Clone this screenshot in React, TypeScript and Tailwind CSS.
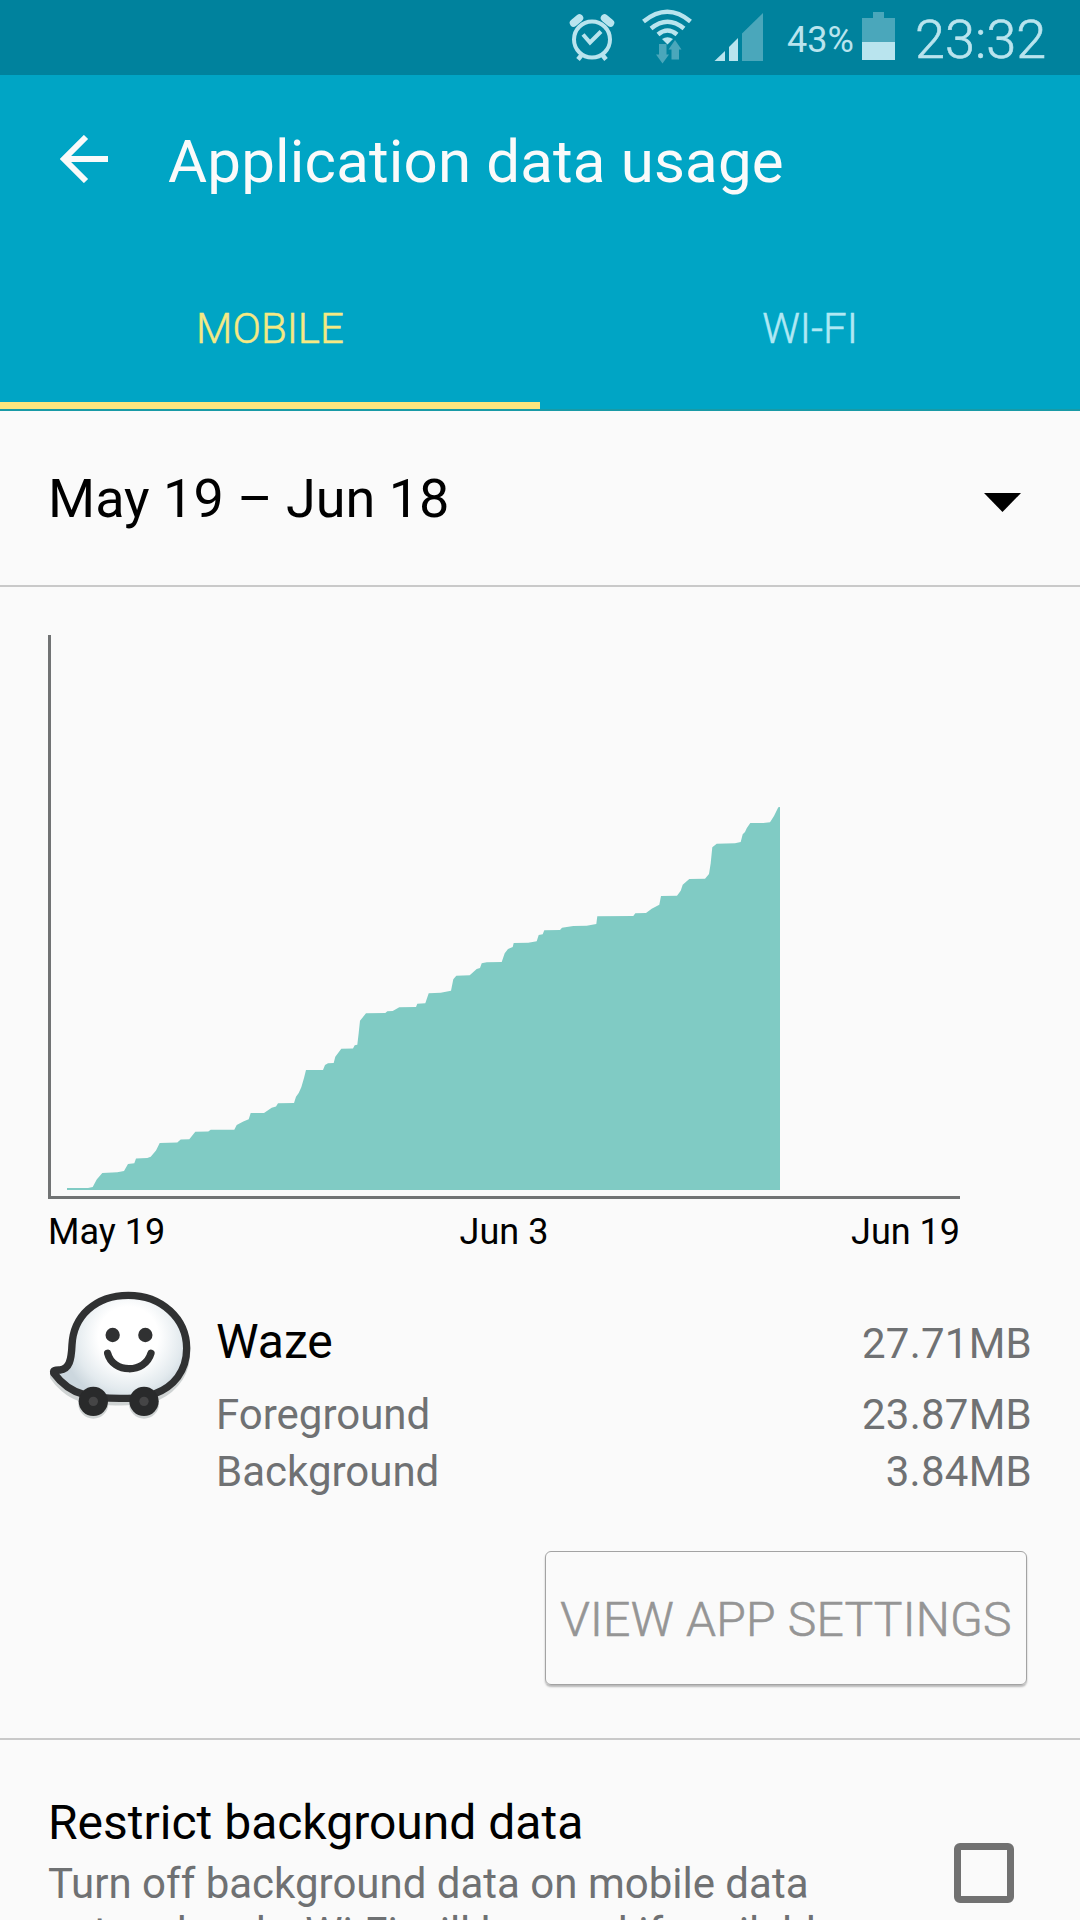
import React, { useState } from 'react'

const usage = [
    [67, 1188], [88, 1188], [92.7, 1187], [96.7, 1179.6], [102.3, 1173], [117.3, 1172.2], [124, 1171], [128, 1164],
    [134.3, 1163.3], [136, 1158.4], [147.3, 1158], [150.7, 1156.7], [156, 1150.6], [159.7, 1143], [177.3, 1142.5],
    [180.7, 1139.6], [189.3, 1139.2], [195.3, 1131.8], [208.3, 1131.4], [210.7, 1129.8], [234.3, 1129.8], [236.7, 1124.9],
    [243.3, 1121.6], [248.7, 1119.2], [250.7, 1113], [264, 1113], [271.7, 1107.8], [276, 1106.5], [278, 1103.3],
    [294, 1102.9], [296, 1096.7], [298.7, 1093], [301.3, 1087.3], [304, 1078], [306, 1070], [323, 1070], [325, 1065],
    [328, 1063.3], [333.7, 1063], [335.3, 1056.7], [341.3, 1048.7], [353, 1048.5], [354.7, 1045.3], [357.3, 1044.7],
    [358.7, 1033], [360, 1020.7], [366, 1013.3], [385.3, 1013], [387.3, 1011.3], [392.7, 1011], [399.3, 1007.3],
    [416, 1007], [417.3, 1003.7], [425.3, 1003.3], [428.7, 993.3], [440.7, 992.7], [451, 990.7], [453.3, 979.3],
    [456.3, 975.7], [469.7, 975.3], [476.7, 969], [480, 968], [481.7, 963.3], [486.7, 962.3], [501.7, 962],
    [504.7, 953.3], [508, 949], [512.7, 947], [513.7, 943], [528.3, 942.7], [536.7, 941.3], [538.7, 935],
    [542.7, 934.3], [544.3, 930.3], [560, 930], [562, 927.7], [573.3, 926], [586.7, 925.7], [596.3, 924],
    [597.3, 916.3], [633.3, 916], [635.3, 913.3], [646, 913], [651.7, 908.7], [659.3, 904.7], [661, 896],
    [677, 895.7], [680.7, 890.7], [682.7, 884.7], [689.3, 879], [705, 878.7], [709, 874], [710.7, 863.3],
    [712.3, 847.3], [716.7, 843.7], [735, 843.3], [740.7, 842], [742.7, 834.3], [745, 832], [746.7, 828.3],
    [750.3, 823], [763.3, 823], [770, 822.3], [774, 816], [778.3, 807.3], [780, 807],
]

function StatusBar() {
    return (
        <div className="flex h-[75px] bg-[#00829d] text-[#b9e4ee]">
            <svg className="ml-[560px] h-[75px] w-[220px] shrink-0" viewBox="560 0 220 75" fill="none">
                {/* alarm */}
                <circle cx="592" cy="39.5" r="18" stroke="#b9e4ee" strokeWidth="4" />
                <path d="M573.500 23l6-5M610.500 23l-6-5" stroke="#b9e4ee" strokeWidth="7.500" strokeLinecap="round" />
                <path d="M583 34.500l7 8 11-11" stroke="#b9e4ee" strokeWidth="4" />
                <path d="M582 54.500l-4 5M602 54.500l4 5" stroke="#b9e4ee" strokeWidth="4.500" />
                {/* wifi */}
                <path d="M643.500 21.500Q667.500 2 690.500 21.500" stroke="#b9e4ee" strokeWidth="4.500" />
                <path d="M651 28.500Q667.500 15 684 28.500" stroke="#b9e4ee" strokeWidth="4.500" />
                <path d="M658 34.500Q667.500 26.500 677 34.500" stroke="#b9e4ee" strokeWidth="4.500" />
                <path d="M662 39Q667.500 35.500 673 39L667.500 44.500z" fill="#b9e4ee" />
                <path d="M659 44h7.500v10.500h2.500l-6.500 9-6.500-9h3zM671.500 59.500v-10h-3l6.500-9.500 6.500 9.500h-2.500v10z" fill="#4aa7bb" />
                {/* signal */}
                <path d="M714.500 61L725 51v10z" fill="#b9e4ee" />
                <path d="M729 61V47l9-9v23z" fill="#b9e4ee" />
                <path d="M742 61V33.500L763 13v48z" fill="#4aa7bb" />
            </svg>
            <span className="ml-[7px] mt-[19px] w-[75px] text-4xl leading-[42px]">43%</span>
            <svg className="h-[75px] w-[33px] shrink-0" viewBox="862 0 33 75">
                <path d="M873 12h11v6h11v24h-33V18h11z" fill="#4aa7bb" />
                <path d="M862 42h33v18h-33z" fill="#b9e4ee" />
            </svg>
            <span className="ml-5 mt-2 text-[54px] leading-[64px] font-light [-webkit-text-stroke:0.6px]">23:32</span>
        </div>
    )
}

function WazeIcon() {
    return (
        <svg className="mt-[1px] h-[130px] w-36 shrink-0" viewBox="54 60 432 390">
            <defs>
                <radialGradient id="body" gradientUnits="userSpaceOnUse" cx="295" cy="200" r="200">
                    <stop offset="0.45" stopColor="#ffffff" />
                    <stop offset="0.8" stopColor="#e3eaee" />
                    <stop offset="1" stopColor="#ccd7de" />
                </radialGradient>
            </defs>
            <g stroke="#cfd3d3" strokeWidth="22" fill="#cfd3d3">
                <path d="M126 225C132 140 195 81 295 81C400 81 470 150 470 235C470 310 430 350 380 375C350 390 200 395 150 376C115 365 85 335 71 313C70 302 78 301 90 301C117 298 124 270 126 225z" transform="translate(0 7)" />
                <circle cx="190" cy="401" r="34" />
                <circle cx="342" cy="401" r="34" />
            </g>
            <path
                d="M126 225C130 140 195 76 295 76C395 76 470 146 470 235C470 305 430 350 375 371C340 389 220 390 160 373C120 362 88 332 71 309C69 299 78 300 90 300C118 297 124 270 126 225z"
                fill="url(#body)"
                stroke="#303132"
                strokeWidth="22"
                strokeLinejoin="round"
            />
            <circle cx="248" cy="195" r="21.500" fill="#303132" />
            <circle cx="346" cy="195" r="21.500" fill="#303132" />
            <path d="M233 250C248 310 345 313 363 250" fill="none" stroke="#303132" strokeWidth="22" strokeLinecap="round" />
            <circle cx="190" cy="394" r="44" fill="#292a2b" />
            <circle cx="342" cy="394" r="44" fill="#292a2b" />
            <circle cx="190" cy="394" r="14" fill="#454546" />
            <circle cx="342" cy="394" r="14" fill="#454546" />
        </svg>
    )
}

export default function App() {
    const [tab, setTab] = useState('mobile')
    const [restricted, setRestricted] = useState(false)
    const points = usage.map((p) => p.join(',')).join(' ')

    return (
        <div className="h-[1920px] w-[1080px] overflow-hidden bg-[#fafafa] font-[Roboto,sans-serif] text-black">
            <StatusBar />

            <header className="h-[336px] border-b-2 border-[#189aa6] bg-[#00a5c5]">
                <div className="flex h-[168px] items-center pl-[60px]">
                    <svg className="h-12 w-12" viewBox="0 0 48 48" fill="none" stroke="#fafafa" strokeWidth="6">
                        <path d="M26 2L4 24l22 22M4 24h44" />
                    </svg>
                    <h1 className="ml-[60px] mt-[5px] text-6xl tracking-[0.17px] text-[#fafafa]">Application data usage</h1>
                </div>
                <div className="flex h-[166px] text-[42px] font-light [-webkit-text-stroke:0.5px]">
                    <button
                        onClick={() => setTab('mobile')}
                        className={`flex-1 border-b-[7px] pt-[12px] ${tab === 'mobile' ? 'border-[#fbe57e] text-[#f6e983]' : 'border-transparent text-[#b0e8f4]'}`}
                    >
                        MOBILE
                    </button>
                    <button
                        onClick={() => setTab('wifi')}
                        className={`flex-1 border-b-[7px] pt-[12px] ${tab === 'wifi' ? 'border-[#fbe57e] text-[#f6e983]' : 'border-transparent text-[#b0e8f4]'}`}
                    >
                        WI-FI
                    </button>
                </div>
            </header>

            <button className="flex h-[176px] w-full items-center justify-between border-b-2 border-[#c9c9c9] pl-12 pr-[59px] text-[54px]">
                <span>May 19 – Jun 18</span>
                <svg className="mt-2 h-[19px] w-[37px]" viewBox="0 0 37 19">
                    <path d="M0 0h37L18.500 19z" />
                </svg>
            </button>

            <section className="pl-12 pt-12">
                <svg className="block h-[564px] w-[912px]" viewBox="48 635 912 564">
                    <polygon points={`${points} 780,1190 67,1190`} fill="#80cbc4" />
                    <path d="M48 635h3v561h909v3H48z" fill="#717374" />
                </svg>
                <div className="mt-[12px] flex w-[912px] text-4xl leading-[42px]">
                    <span className="flex-1">May 19</span>
                    <span className="flex-1 text-center">Jun 3</span>
                    <span className="flex-1 text-right">Jun 19</span>
                </div>
            </section>

            <section className="mt-[36px] flex h-[451px] flex-col border-b-2 border-[#c9c9c9] px-12 text-[#6f7173]">
                <div className="flex">
                    <WazeIcon />
                    <div className="ml-6 flex-1 text-[42px] leading-[57px]">
                        <div className="mt-[24px] flex items-baseline justify-between">
                            <span className="text-5xl leading-[57px] text-black">Waze</span>
                            <span className="tracking-[0.25px]">27.71MB</span>
                        </div>
                        <div className="mt-[14px] flex justify-between">
                            <span>Foreground</span>
                            <span className="tracking-[0.25px]">23.87MB</span>
                        </div>
                        <div className="flex justify-between">
                            <span>Background</span>
                            <span className="tracking-[0.25px]">3.84MB</span>
                        </div>
                    </div>
                </div>
                <button className="mr-[5px] mt-[51px] h-[134px] w-[482px] self-end whitespace-nowrap rounded-md border border-[#a3a3a3] pt-[3px] text-5xl font-light tracking-[0.25px] text-[#959595] shadow-[0_2px_2px_#0004] [-webkit-text-stroke:0.6px]">
                    VIEW APP SETTINGS
                </button>
            </section>

            <section className="flex justify-between pl-12 pr-[66px] pt-[54px]">
                <div>
                    <h2 className="text-5xl leading-[57px]">Restrict background data</h2>
                    <p className="mt-[8px] whitespace-nowrap text-[42px] leading-[49px] text-[#6f7173]">
                        Turn off background data on mobile data
                        <br />
                        network only. Wi-Fi will be used if available.
                    </p>
                </div>
                <button
                    aria-label="Restrict background data"
                    onClick={() => setRestricted(!restricted)}
                    className={`mt-[49px] h-[60px] w-[60px] rounded-md border-[7px] border-[#717171] ${restricted ? 'bg-[#717171]' : ''}`}
                />
            </section>
        </div>
    )
}
